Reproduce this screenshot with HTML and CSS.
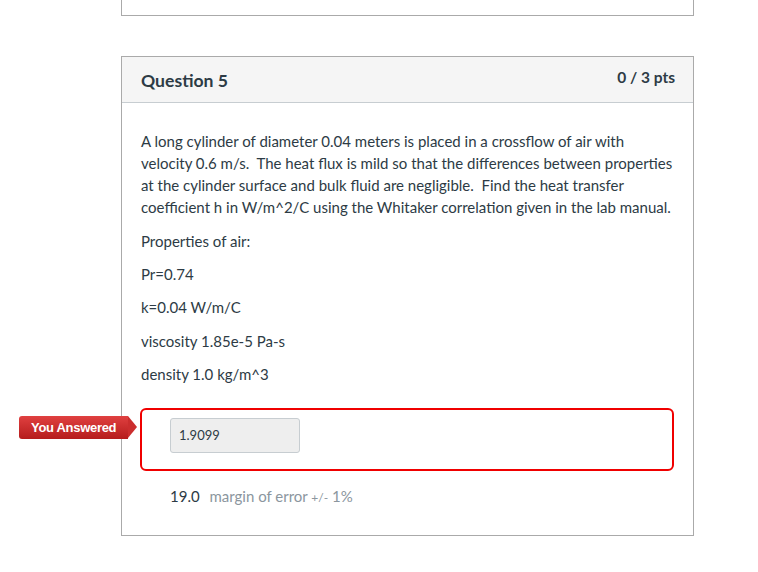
FILE: index.html
```html
<!DOCTYPE html>
<html>
<head>
<meta charset="utf-8">
<link rel="stylesheet" href="styles.css">
</head>
<body>
<div class="page">
  <div class="prev-card"></div>
  <div class="card">
    <div class="card-header">
      <span class="q-title">Question 5</span>
      <span class="q-points">0 / 3 pts</span>
    </div>
    <div class="card-body">
      <p class="q-text">A long cylinder of diameter 0.04 meters is placed in a crossflow of air with velocity 0.6 m/s.&nbsp; The heat flux is mild so that the differences between properties at the cylinder surface and bulk fluid are negligible.&nbsp; Find the heat transfer coefficient h in W/m^2/C using the Whitaker correlation given in the lab manual.</p>
      <p class="q-line">Properties of air:</p>
      <p class="q-line">Pr=0.74</p>
      <p class="q-line">k=0.04 W/m/C</p>
      <p class="q-line">viscosity 1.85e-5 Pa-s</p>
      <p class="q-line">density 1.0 kg/m^3</p>
      <div class="answer">
        <div class="badge">You Answered</div>
        <div class="answer-input">1.9099</div>
      </div>
      <div class="correct">
        <span class="correct-val">19.0</span>
        <span class="margin">margin of error <span class="pm">+/-</span> 1%</span>
      </div>
    </div>
  </div>
</div>
</body>
</html>
```
FILE: styles.css
```css
html, body {
  margin: 0;
  padding: 0;
  background: #fff;
}
body {
  font-family: Lato, "Open Sans", sans-serif;
  color: #2d3b45;
  width: 758px;
  height: 572px;
  overflow: hidden;
}
.page {
  padding-left: 121px;
  width: 573px;
}
.prev-card {
  height: 15px;
  border: 1px solid #aaaaaa;
  border-top: none;
}
.card {
  margin-top: 40px;
  border: 1px solid #aaaaaa;
  height: 480px;
  box-sizing: border-box;
}
.card-header {
  background: #f5f5f5;
  border-bottom: 1px solid #c7cdd1;
  height: 45px;
  display: flex;
  justify-content: space-between;
  padding: 0 18px 0 19px;
}
.q-title {
  font-weight: bold;
  font-size: 17.6px;
  line-height: 17px;
  margin-top: 15px;
  color: #2d3b45;
}
.q-points {
  font-weight: bold;
  font-size: 15.5px;
  line-height: 15px;
  margin-top: 13px;
  color: #2d3b45;
}
.card-body {
  padding: 27px 19px 0 19px;
}
.card-body p {
  margin: 0;
  font-size: 15px;
  line-height: 22px;
}
.q-text {
  width: 534px;
  margin-bottom: 12px !important;
}
.q-line {
  margin-bottom: 11.2px !important;
}
.answer {
  position: relative;
  margin-top: 23px;
  margin-left: -1px;
  height: 63px;
  border: 2px solid #f00000;
  border-radius: 6px;
  box-sizing: border-box;
  width: 534px;
  padding: 8px 0 0 28px;
}
.badge {
  position: absolute;
  left: -123px;
  top: 6px;
  height: 23px;
  width: 97px;
  padding-left: 12px;
  box-sizing: content-box;
  background: linear-gradient(#e04040, #b51c1c);
  color: #fff;
  font-family: "Liberation Sans", Arial, sans-serif;
  font-weight: bold;
  font-size: 13px;
  line-height: 23px;
  border-radius: 3px 0 0 3px;
  letter-spacing: -0.3px;
}
.badge::after {
  content: "";
  position: absolute;
  right: -9px;
  top: 0;
  border-top: 11.5px solid transparent;
  border-bottom: 11.5px solid transparent;
  border-left: 9px solid #cb2e2e;
}
.answer-input {
  width: 130px;
  height: 35px;
  box-sizing: border-box;
  background: #eeeeee;
  border: 1px solid #c7cdd1;
  border-radius: 3px;
  font-size: 13px;
  line-height: 33px;
  padding-left: 8px;
  color: #2d3b45;
}
.correct {
  margin-top: 15px;
  padding-left: 29px;
  font-size: 15px;
  line-height: 20px;
}
.correct-val {
  color: #2d3b45;
  margin-right: 6px;
}
.margin {
  color: #8b969e;
  font-size: 15px;
}
.pm {
  font-size: 12px;
}
```
